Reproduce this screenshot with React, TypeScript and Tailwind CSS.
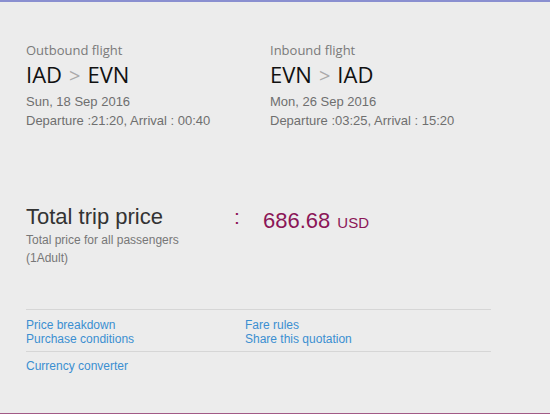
const arial = { fontFamily: '"Liberation Sans", Arial, sans-serif' };

function FlightBlock({ label, from, to, date, times }: { label: string; from: string; to: string; date: string; times: string }) {
  return (
    <div className="w-[244px]">
      <p className="font-['Open_Sans',sans-serif] text-[13px] leading-[18px] text-[#7a7a7a]">{label}</p>
      <p className="font-['Open_Sans',sans-serif] text-[22px] leading-[28px] text-[#111] mt-[1px]">
        {from}
        <span className="text-[20px] text-[#aaa] mx-[7px]">&gt;</span>
        {to}
      </p>
      <div className="font-['Liberation_Sans',Arial,sans-serif] text-[13px] leading-[19px] text-[#6f6f6f] mt-[2px]">
        <p>{date}</p>
        <p>{times}</p>
      </div>
    </div>
  );
}

export default function App() {
  return (
    <div className="w-[550px] h-[414px] bg-[#ececec] border-t-2 border-t-[#8a8fd0] border-b border-b-[#a15a86] overflow-hidden" style={arial}>
      <div className="pl-[26px] pt-[39px]">
        <div className="flex">
          <FlightBlock label="Outbound flight" from="IAD" to="EVN" date="Sun, 18 Sep 2016" times="Departure :21:20, Arrival : 00:40" />
          <FlightBlock label="Inbound flight" from="EVN" to="IAD" date="Mon, 26 Sep 2016" times="Departure :03:25, Arrival : 15:20" />
        </div>

        <div className="flex mt-[74px]">
          <div className="w-[206px]">
            <p className="text-[22px] leading-[26px] text-[#333]">Total trip price</p>
            <p className="text-[12px] leading-[18px] text-[#777] mt-[1px]">Total price for all passengers</p>
            <p className="text-[12px] leading-[18px] text-[#777]">(1Adult)</p>
          </div>
          <div className="text-[#8b1657] text-[21px] leading-[26px] w-[31px] pl-[2px]">:</div>
          <div className="text-[#8b1657] flex items-baseline pt-[4px] h-[30px]">
            <span className="text-[22px] leading-[26px]">686.68</span>
            <span className="text-[15px] ml-[7px]">USD</span>
          </div>
        </div>

        <div className="w-[465px] mt-[42px] border-t border-[#d6d6d6] text-[12px] leading-[14px] text-[#3b8fd1]">
          <div className="grid grid-cols-[219px_1fr] pt-[8px] pb-[5px]">
            <a>Price breakdown</a>
            <a>Fare rules</a>
            <a>Purchase conditions</a>
            <a>Share this quotation</a>
          </div>
          <div className="border-t border-[#d6d6d6] pt-[7px]">
            <a>Currency converter</a>
          </div>
        </div>
      </div>
    </div>
  );
}
